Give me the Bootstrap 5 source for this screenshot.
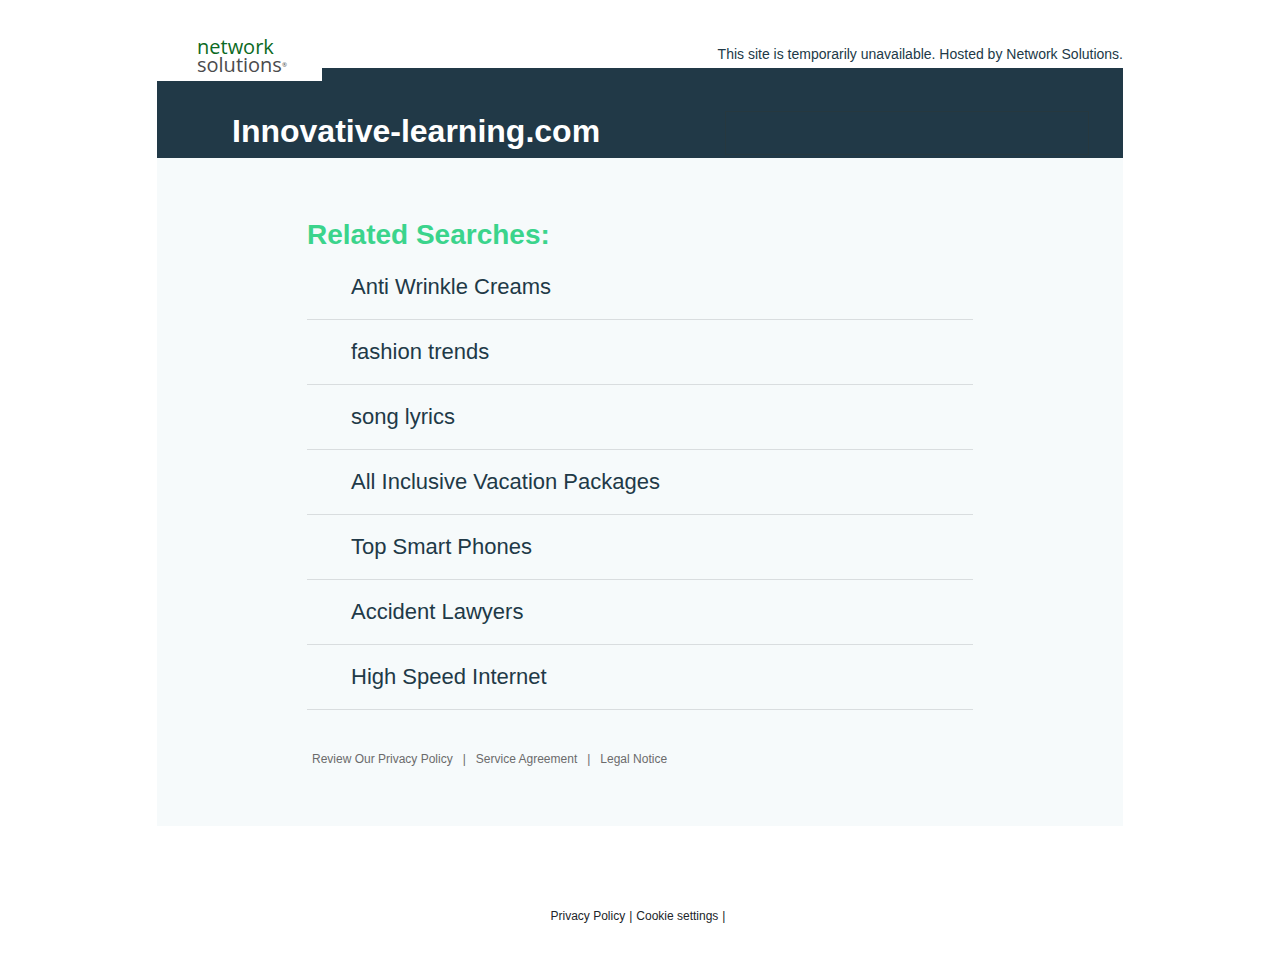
<!DOCTYPE html>
<html lang="en">
<head>
<meta charset="utf-8">
<meta name="viewport" content="width=device-width, initial-scale=1">
<title>Innovative-learning.com</title>
<link href="https://cdn.jsdelivr.net/npm/bootstrap@5.3.0/dist/css/bootstrap.min.css" rel="stylesheet">
<style>
  body { font-family: "Liberation Sans", Arial, sans-serif; color: #213947; font-size: 14px; }
  .site { max-width: 966px; }
  .notice { line-height: 16px; padding: 46px 0 6px; }
  .banner { background: #213947; padding: 43px 34px 3px 75px; }
  .domain { font-size: 32px; line-height: 40px; font-weight: 700; color: #fff; }
  .search-slot { width: 364px; height: 44px; border: 1px solid #26383f; }
  .logo { width: 165px; height: 81px; padding: 38px 0 0 40px; background: #fff; font-family: "Open Sans", "Noto Sans", sans-serif; font-size: 20px; line-height: 18px; color: #0b6a23; }
  .logo:hover { color: #0b6a23; }
  .logo-first { font-weight: 500; }
  .logo-second { color: #4b4b4d; }
  .logo-mark { font-size: 6px; line-height: 16px; }
  .panel { background: #f6fafb; padding: 57px 150px 56px; }
  .panel-title { font-size: 28px; line-height: 40px; font-weight: 700; color: #3bd48c; }
  .searches a { display: block; font-size: 22px; line-height: 24px; padding: 20px 44px; color: #213947; border-bottom: 1px solid #d9dddf; }
  .policies { font-size: 12px; line-height: 16px; padding: 41px 5px 3px; gap: 10px; color: #6b6b6b; }
  .page-foot { font-size: 12px; line-height: 16px; padding: 82px 4px 40px 0; gap: 4px; color: #212529; }
  @media (max-width: 767px) {
    .notice { padding: 84px 12px 6px; }
    .banner { padding: 24px; flex-wrap: wrap; }
    .search-slot { width: 100%; }
    .domain { overflow-wrap: anywhere; }
    .panel { padding: 32px 24px; }
    .searches a { padding: 20px 12px; }
  }
</style>
</head>
<body class="bg-white">
<div class="site mx-auto">
  <header class="position-relative">
    <div class="notice text-end">This site is temporarily unavailable. Hosted by Network Solutions.</div>
    <div class="banner d-flex align-items-start justify-content-between">
      <h1 class="domain m-0">Innovative-learning.com</h1>
      <div class="search-slot"></div>
    </div>
    <a href="#" class="logo position-absolute top-0 start-0 text-decoration-none">
      <span class="logo-first d-block">network</span>
      <span class="logo-second d-flex align-items-center"><span>solutions</span><span class="logo-mark">®</span></span>
    </a>
  </header>
  <main class="panel">
    <h2 class="panel-title m-0">Related Searches:</h2>
    <ul class="searches list-unstyled m-0">
      <li><a href="#" class="text-decoration-none">Anti Wrinkle Creams</a></li>
      <li><a href="#" class="text-decoration-none">fashion trends</a></li>
      <li><a href="#" class="text-decoration-none">song lyrics</a></li>
      <li><a href="#" class="text-decoration-none">All Inclusive Vacation Packages</a></li>
      <li><a href="#" class="text-decoration-none">Top Smart Phones</a></li>
      <li><a href="#" class="text-decoration-none">Accident Lawyers</a></li>
      <li><a href="#" class="text-decoration-none">High Speed Internet</a></li>
    </ul>
    <nav class="policies d-flex flex-wrap" aria-label="Policies">
      <a href="#" class="text-reset text-decoration-none">Review Our Privacy Policy</a><span>|</span>
      <a href="#" class="text-reset text-decoration-none">Service Agreement</a><span>|</span>
      <a href="#" class="text-reset text-decoration-none">Legal Notice</a>
    </nav>
  </main>
  <footer class="page-foot d-flex flex-wrap justify-content-center">
    <a href="#" class="text-reset text-decoration-none">Privacy Policy</a><span>|</span>
    <a href="#" class="text-reset text-decoration-none">Cookie settings</a><span>|</span>
  </footer>
</div>
<script src="https://cdn.jsdelivr.net/npm/bootstrap@5.3.0/dist/js/bootstrap.bundle.min.js"></script>
</body>
</html>
